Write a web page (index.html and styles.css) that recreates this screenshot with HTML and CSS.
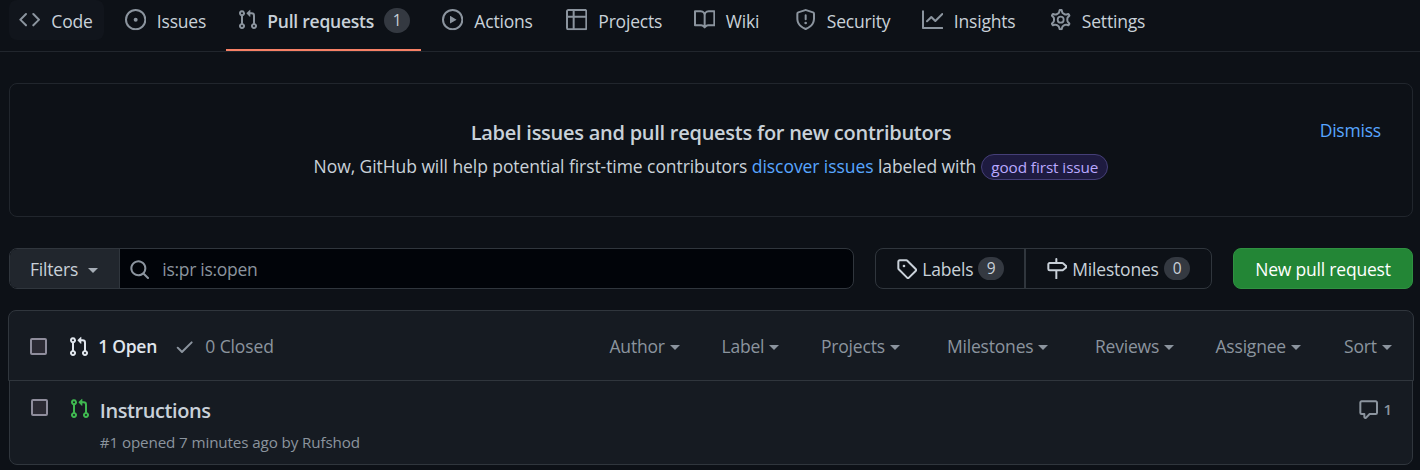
FILE: index.html
```html
<!DOCTYPE html>
<html lang="en">
<head>
<meta charset="utf-8">
<title>Pull requests</title>
<link rel="stylesheet" href="styles.css">
</head>
<body>
<svg class="sprite" aria-hidden="true">
  <symbol id="code" viewBox="0 0 16 16"><path d="M4.72 3.22a.75.75 0 011.06 1.06L2.06 8l3.72 3.72a.75.75 0 11-1.06 1.06L.47 8.53a.75.75 0 010-1.06l4.25-4.25zm6.56 0a.75.75 0 10-1.06 1.06L13.94 8l-3.72 3.72a.75.75 0 101.06 1.06l4.25-4.25a.75.75 0 000-1.06l-4.25-4.25z"/></symbol>
  <symbol id="issue" viewBox="0 0 16 16"><path d="M8 9.5a1.5 1.5 0 100-3 1.5 1.5 0 000 3z"/><path d="M8 0a8 8 0 100 16A8 8 0 008 0zM1.5 8a6.5 6.5 0 1113 0 6.5 6.5 0 01-13 0z" fill-rule="evenodd"/></symbol>
  <symbol id="pr" viewBox="0 0 16 16"><path fill-rule="evenodd" d="M7.177 3.073L9.573.677A.25.25 0 0110 .854v4.792a.25.25 0 01-.427.177L7.177 3.427a.25.25 0 010-.354zM3.75 2.5a.75.75 0 100 1.5.75.75 0 000-1.5zm-2.25.75a2.25 2.25 0 113 2.122v5.256a2.251 2.251 0 11-1.5 0V5.372A2.25 2.25 0 011.5 3.25zM11 2.5h-1V4h1a1 1 0 011 1v5.628a2.251 2.251 0 101.5 0V5A2.5 2.5 0 0011 2.5zm1 10.25a.75.75 0 111.5 0 .75.75 0 01-1.5 0zM3.75 12a.75.75 0 100 1.5.75.75 0 000-1.5z"/></symbol>
  <symbol id="play" viewBox="0 0 16 16"><path fill-rule="evenodd" d="M1.5 8a6.5 6.5 0 1113 0 6.5 6.5 0 01-13 0zM8 0a8 8 0 100 16A8 8 0 008 0zM6.379 5.227A.25.25 0 006 5.442v5.117a.25.25 0 00.379.214l4.264-2.559a.25.25 0 000-.428L6.379 5.227z"/></symbol>
  <symbol id="table" viewBox="0 0 16 16"><path fill-rule="evenodd" d="M0 1.75C0 .784.784 0 1.75 0h12.5C15.216 0 16 .784 16 1.75v12.5A1.75 1.75 0 0114.25 16H1.75A1.75 1.75 0 010 14.25V1.75zM1.5 6.5v7.75c0 .138.112.25.25.25H5v-8H1.5zM6.5 6.5v8h7.75a.25.25 0 00.25-.25V6.5h-8zM14.5 5V1.75a.25.25 0 00-.25-.25H6.5V5h8zM5 5V1.5H1.75a.25.25 0 00-.25.25V5H5z"/></symbol>
  <symbol id="book" viewBox="0 0 16 16"><path fill-rule="evenodd" d="M0 1.75A.75.75 0 01.75 1h4.253c1.227 0 2.317.59 3 1.501A3.744 3.744 0 0111.006 1h4.245a.75.75 0 01.75.75v10.5a.75.75 0 01-.75.75h-4.507a2.25 2.25 0 00-1.591.659l-.622.621a.75.75 0 01-1.06 0l-.622-.621A2.25 2.25 0 005.258 13H.75a.75.75 0 01-.75-.75V1.75zm8.755 3a2.25 2.25 0 012.25-2.25H14.5v9h-3.757c-.71 0-1.4.201-1.992.572l.004-7.322zm-1.504 7.324l.004-5.073-.002-2.253A2.25 2.25 0 005.003 2.5H1.5v9h3.757a3.75 3.75 0 011.994.574z"/></symbol>
  <symbol id="shield" viewBox="0 0 16 16"><path fill-rule="evenodd" d="M7.467.133a1.75 1.75 0 011.066 0l5.25 1.68A1.75 1.75 0 0115 3.48V7c0 1.566-.32 3.182-1.303 4.682-.983 1.498-2.585 2.813-5.032 3.855a1.7 1.7 0 01-1.33 0c-2.447-1.042-4.049-2.357-5.032-3.855C1.32 10.182 1 8.566 1 7V3.48a1.75 1.75 0 011.217-1.667l5.25-1.68zm.61 1.429a.25.25 0 00-.153 0l-5.25 1.68a.25.25 0 00-.174.238V7c0 1.358.275 2.666 1.057 3.86.784 1.194 2.121 2.34 4.366 3.297a.2.2 0 00.154 0c2.245-.956 3.582-2.104 4.366-3.298C13.225 9.666 13.5 8.36 13.5 7V3.48a.25.25 0 00-.174-.237l-5.25-1.68zM9 10.5a1 1 0 11-2 0 1 1 0 012 0zm-.25-5.75a.75.75 0 10-1.5 0v3a.75.75 0 001.5 0v-3z"/></symbol>
  <symbol id="graph" viewBox="0 0 16 16"><path d="M1.5 1.75a.75.75 0 00-1.5 0v12.5c0 .414.336.75.75.75h14.5a.75.75 0 000-1.5H1.5V1.75zm14.28 2.53a.75.75 0 00-1.06-1.06L10 7.94 7.53 5.47a.75.75 0 00-1.06 0L3.22 8.72a.75.75 0 001.06 1.06L7 7.06l2.47 2.47a.75.75 0 001.06 0l5.25-5.25z"/></symbol>
  <symbol id="gear" viewBox="0 0 16 16"><g fill="none" stroke="currentColor" stroke-width="1.35"><path transform="translate(8 8) scale(1.11) translate(-8 -8)" d="M7.429 1.525a6.593 6.593 0 011.142 0c.036.003.108.036.137.146l.289 1.105c.147.56.55.967.997 1.189.174.086.341.183.501.29.417.278.97.423 1.53.27l1.102-.303c.11-.03.175.016.195.046.219.31.41.641.573.989.014.031.022.11-.059.19l-.815.806c-.411.406-.562.957-.53 1.456a4.588 4.588 0 010 .582c-.032.499.119 1.05.53 1.456l.815.806c.08.08.073.159.059.19a6.494 6.494 0 01-.573.99c-.02.029-.086.074-.195.045l-1.103-.303c-.559-.153-1.112-.008-1.529.27-.16.107-.327.204-.5.29-.449.222-.851.628-.998 1.189l-.289 1.105c-.029.11-.101.143-.137.146a6.613 6.613 0 01-1.142 0c-.036-.003-.108-.037-.137-.146l-.289-1.105c-.147-.56-.55-.967-.997-1.189a4.502 4.502 0 01-.501-.29c-.417-.278-.97-.423-1.53-.27l-1.102.303c-.11.03-.175-.016-.195-.046a6.492 6.492 0 01-.573-.989c-.014-.031-.022-.11.059-.19l.815-.806c.411-.406.562-.957.53-1.456a4.587 4.587 0 010-.582c.032-.499-.119-1.05-.53-1.456l-.815-.806c-.08-.08-.073-.159-.059-.19a6.44 6.44 0 01.573-.99c.02-.029.086-.075.195-.045l1.103.303c.559.153 1.112.008 1.529-.27.16-.107.327-.204.5-.29.449-.222.851-.628.998-1.189l.289-1.105c.029-.11.101-.143.137-.146z"/><circle cx="8" cy="8" r="2.25"/></g></symbol>
  <symbol id="search" viewBox="0 0 16 16"><path fill-rule="evenodd" d="M11.5 7a4.499 4.499 0 11-8.998 0A4.499 4.499 0 0111.5 7zm-.82 4.74a6 6 0 111.06-1.06l3.04 3.04a.75.75 0 11-1.06 1.06l-3.04-3.04z"/></symbol>
  <symbol id="tag" viewBox="0 0 16 16"><path fill-rule="evenodd" d="M2.5 7.775V2.75a.25.25 0 01.25-.25h5.025a.25.25 0 01.177.073l6.25 6.25a.25.25 0 010 .354l-5.025 5.025a.25.25 0 01-.354 0l-6.25-6.25a.25.25 0 01-.073-.177zm-1.5 0V2.75C1 1.784 1.784 1 2.75 1h5.025c.464 0 .91.184 1.238.513l6.25 6.25a1.75 1.75 0 010 2.474l-5.026 5.026a1.75 1.75 0 01-2.474 0l-6.25-6.25A1.75 1.75 0 011 7.775zM6 5a1 1 0 100 2 1 1 0 000-2z"/></symbol>
  <symbol id="milestone" viewBox="0 0 16 16"><path fill-rule="evenodd" d="M7.75 0a.75.75 0 01.75.75V3h3.634c.414 0 .814.147 1.13.414l2.07 1.75a1.75 1.75 0 010 2.672l-2.07 1.75a1.75 1.75 0 01-1.13.414H8.5v5.25a.75.75 0 11-1.5 0V10H2.75A1.75 1.75 0 011 8.25v-3.5C1 3.784 1.784 3 2.75 3H7V.75A.75.75 0 017.75 0zm0 8.5h4.384a.25.25 0 00.161-.06l2.07-1.75a.25.25 0 000-.38l-2.07-1.75a.25.25 0 00-.161-.06H2.75a.25.25 0 00-.25.25v3.5c0 .138.112.25.25.25h5z"/></symbol>
  <symbol id="check" viewBox="0 0 16 16"><path d="M13.78 4.22a.75.75 0 010 1.06l-7.25 7.25a.75.75 0 01-1.06 0L2.22 9.28a.75.75 0 011.06-1.06L6 10.94l6.72-6.72a.75.75 0 011.06 0z"/></symbol>
  <symbol id="comment" viewBox="0 0 16 16"><path fill-rule="evenodd" d="M2.75 2.5a.25.25 0 00-.25.25v7.5c0 .138.112.25.25.25h2a.75.75 0 01.75.75v2.19l2.72-2.72a.75.75 0 01.53-.22h4.5a.25.25 0 00.25-.25v-7.5a.25.25 0 00-.25-.25H2.75zM1 2.75C1 1.784 1.784 1 2.75 1h10.5c.966 0 1.75.784 1.75 1.75v7.5A1.75 1.75 0 0113.25 12H9.06l-2.573 2.573A1.457 1.457 0 014 13.543V12H2.75A1.75 1.75 0 011 10.25v-7.5z"/></symbol>
</svg>

<nav class="tabs">
  <a class="tab tab-hover"><svg class="icon"><use href="#code"/></svg><span>Code</span></a>
  <a class="tab"><svg class="icon"><use href="#issue"/></svg><span>Issues</span></a>
  <a class="tab tab-current"><svg class="icon"><use href="#pr"/></svg><span>Pull requests</span><b class="counter">1</b></a>
  <a class="tab"><svg class="icon"><use href="#play"/></svg><span>Actions</span></a>
  <a class="tab"><svg class="icon"><use href="#table"/></svg><span>Projects</span></a>
  <a class="tab"><svg class="icon"><use href="#book"/></svg><span>Wiki</span></a>
  <a class="tab"><svg class="icon"><use href="#shield"/></svg><span>Security</span></a>
  <a class="tab"><svg class="icon"><use href="#graph"/></svg><span>Insights</span></a>
  <a class="tab"><svg class="icon"><use href="#gear"/></svg><span>Settings</span></a>
</nav>

<main class="page">
  <section class="notice">
    <div class="notice-body">
      <h2 class="notice-title">Label issues and pull requests for new contributors</h2>
      <p class="notice-text"><span>Now, GitHub will help potential first-time contributors <a class="link">discover issues</a> labeled with</span><span class="issue-label">good first issue</span></p>
    </div>
    <a class="link dismiss">Dismiss</a>
  </section>

  <div class="toolbar">
    <div class="search">
      <button class="filters">Filters<i class="caret"></i></button>
      <div class="query"><svg class="icon"><use href="#search"/></svg><span>is:pr is:open</span></div>
    </div>
    <div class="links">
      <a class="links-item labels"><svg class="icon"><use href="#tag"/></svg><span>Labels</span><b class="counter">9</b></a>
      <a class="links-item milestones"><svg class="icon"><use href="#milestone"/></svg><span>Milestones</span><b class="counter">0</b></a>
    </div>
    <button class="primary">New pull request</button>
  </div>

  <section class="list">
    <header class="list-head">
      <i class="checkbox"></i>
      <a class="state state-open"><svg class="icon"><use href="#pr"/></svg><span>1 Open</span></a>
      <a class="state"><svg class="icon"><use href="#check"/></svg><span>0 Closed</span></a>
      <div class="menus">
        <a class="menu">Author<i class="caret"></i></a>
        <a class="menu">Label<i class="caret"></i></a>
        <a class="menu">Projects<i class="caret"></i></a>
        <a class="menu">Milestones<i class="caret"></i></a>
        <a class="menu">Reviews<i class="caret"></i></a>
        <a class="menu">Assignee<i class="caret"></i></a>
        <a class="menu">Sort<i class="caret"></i></a>
      </div>
    </header>
    <article class="row">
      <i class="checkbox"></i>
      <svg class="icon row-icon"><use href="#pr"/></svg>
      <div class="row-body">
        <h3 class="row-title">Instructions</h3>
        <p class="row-meta">#1 opened 7 minutes ago by Rufshod</p>
      </div>
      <a class="comments"><svg class="icon"><use href="#comment"/></svg><span>1</span></a>
    </article>
  </section>
</main>
</body>
</html>
```
FILE: styles.css
```css
* { box-sizing: border-box; }

body {
  margin: 0;
  height: 470px;
  overflow: hidden;
  background: #0d1117;
  color: #c9d1d9;
  font: 17.5px/28px "Open Sans", "Noto Sans", sans-serif;
  letter-spacing: -0.2px;
  white-space: nowrap;
}

h2, h3, p { margin: 0; }
button { font: inherit; letter-spacing: inherit; color: inherit; padding: 0; }
.sprite { display: none; }
.icon { width: 21.33px; height: 21.33px; fill: currentColor; flex: none; }

.caret {
  display: inline-block;
  border: 5.33px solid transparent;
  border-top-color: currentColor;
  border-bottom: 0;
}

.counter {
  min-width: 26px;
  height: 25px;
  border-radius: 13px;
  background: #343941;
  color: #c9d1d9;
  font-size: 15.5px;
  font-weight: 400;
  line-height: 25px;
  text-align: center;
}

/* Repository tabs */
.tabs {
  display: grid;
  grid-template-columns: 105.5px 114px 203.5px 124px 127.5px 101px 127px 128px 130px;
  height: 52px;
  padding-left: 9px;
  border-bottom: 1px solid #21262d;
}
.tab { display: flex; height: 40px; padding: 0 10px; align-items: center; gap: 11px; justify-self: start; border-radius: 8px; }
.tab .icon { color: #8b949e; }
.tab span { padding-top: 2px; }
.tab-hover { background: #11151c; padding-right: 12px; width: 95px; }
.tab-current { height: 51px; width: 195px; margin-left: -2.5px; padding: 0 0 9px 11px; gap: 9px; border-bottom: 2px solid #f78166; border-radius: 0; font-weight: 600; letter-spacing: -0.25px; }
.tab-current .counter { margin-left: auto; margin-right: 11px; }

.page { padding: 31px 6px 0 9px; }

/* Contributor notice */
.notice {
  position: relative;
  height: 134px;
  width: 1404px;
  padding-top: 35px;
  border: 1px solid #21262d;
  border-radius: 8px;
  text-align: center;
}
.notice-title { font-size: 20px; font-weight: 600; line-height: 28px; letter-spacing: -0.26px; }
.notice-text { display: flex; justify-content: center; align-items: center; gap: 5px; margin-top: 5px; letter-spacing: -0.07px; }
.link { color: #58a6ff; }
.issue-label { height: 26px; padding: 0 9px; margin-top: 1px; border: 1px solid #453f78; border-radius: 13px; background: #1e1b40; color: #b9a8ff; font-size: 15.3px; line-height: 25px; letter-spacing: -0.08px; }
.dismiss { position: absolute; right: 31px; top: 32px; }

/* Search and actions */
.toolbar { display: flex; margin-top: 31px; height: 41px; }
.search { display: flex; width: 845px; border: 1px solid #30363d; border-radius: 8px; overflow: hidden; background: #010409; }
.filters { display: flex; align-items: center; gap: 10px; width: 110px; padding-left: 20px; border: 0; border-right: 1px solid #30363d; background: #21262d; }
.filters .caret { margin-top: 4px; color: #a6adb6; }
.query { display: flex; align-items: center; gap: 12px; padding-left: 9px; color: #8b949e; letter-spacing: -0.3px; }
.query .icon { margin-top: 2px; }
.links { display: flex; width: 337px; margin-left: 21px; border: 1px solid #30363d; border-radius: 8px; }
.links-item { display: flex; align-items: center; }
.links-item .icon { margin-right: 5px; }
.links-item .counter { margin-left: auto; height: 23px; line-height: 23px; }
.labels { width: 150px; padding: 0 20px; border-right: 2px solid #30363d; }
.milestones { flex: 1; padding: 0 21px 0 20px; }
.primary { width: 180px; margin-left: 21px; border: 1px solid #2f9141; border-radius: 8px; background: #238636; color: #fff; }

/* Pull request list */
.list { margin: 21px 0 0 -1px; width: 1406px; }
.list-head { position: relative; display: flex; align-items: center; height: 71px; padding: 1px 20px 0; border: 1px solid #30363d; border-radius: 8px 8px 0 0; background: #161b22; color: #8b949e; }
.checkbox { width: 17px; height: 17px; margin: 1px; border: 2px solid #8f8d9c; border-radius: 2px; background: #2b2a33; flex: none; }
.state { display: flex; align-items: center; gap: 9px; margin-left: 20px; }
.state .icon { margin-top: 2px; }
.state-open { color: #e0e6ed; font-weight: 600; letter-spacing: -0.3px; }
.state:not(.state-open) { margin-left: 17px; gap: 10px; letter-spacing: -0.1px; }
.menus { display: grid; grid-template-columns: 112px 99.5px 126px 148px 120.5px 128.5px 49px; margin-left: auto; }
.menu { display: flex; align-items: center; gap: 5px; }
.menu .caret { margin-top: 3px; }
.row { display: flex; height: 85px; margin: -1px 1px 0; padding: 16px 20px 0; border: 1px solid #30363d; border-radius: 0 0 8px 8px; background: #161b22; }
.row .checkbox { margin-top: 2px; }
.row-icon { margin: 1px 0 0 20px; color: #3fb950; }
.row-body { margin-left: 9.5px; }
.row-title { font-size: 20px; font-weight: 600; line-height: 28px; letter-spacing: -0.42px; }
.row-meta { margin-top: 5px; color: #8b949e; font-size: 15.2px; line-height: 24px; letter-spacing: -0.12px; }
.comments { display: flex; gap: 4px; height: 24px; align-items: center; margin-left: auto; color: #8b949e; font-size: 15px; font-weight: 600; }
.comments .icon { margin-top: 1px; }
.comments span { margin-top: -1px; }
```
